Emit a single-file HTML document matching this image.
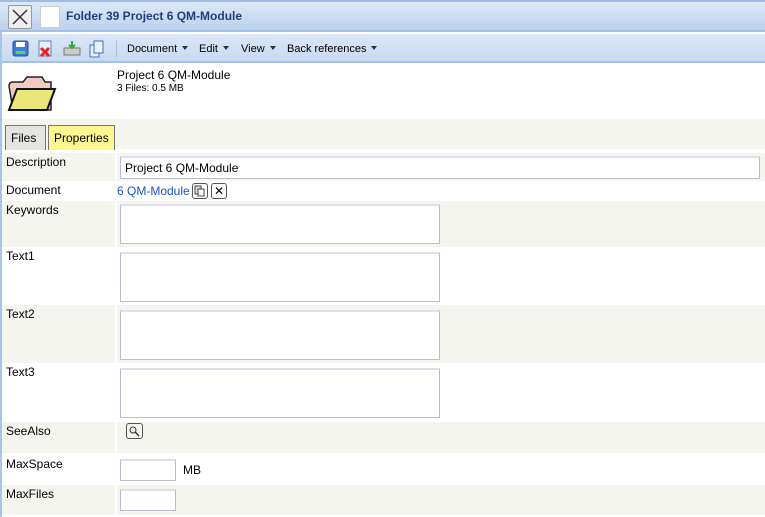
<!DOCTYPE html>
<html><head><meta charset="utf-8"><style>
*{margin:0;padding:0;box-sizing:border-box}
body{width:765px;height:517px;overflow:hidden;background:#fff;font-family:"Liberation Sans",Verdana,sans-serif;font-size:12px;color:#000;position:relative}
.abs{position:absolute}
.title{left:0;top:0;width:765px;height:32px;background:linear-gradient(#dde8f6,#bcd2ee);border-top:2px solid #9dbbe6;border-bottom:2px solid #a5c0e6}
.tb{left:0;top:34px;width:765px;height:29px;background:linear-gradient(#dce7f6,#c8daf1);border-bottom:2px solid #a5c0e6}
.lb{left:0;top:32px;width:2px;height:485px;background:#a9c4ea}
.menu{font-size:11px;top:43px}
.tri{display:inline-block;width:0;height:0;border-left:3px solid transparent;border-right:3px solid transparent;border-top:4px solid #234;margin-left:5px;vertical-align:2px}
.row{left:2px;width:763px}
.g{background:#f5f5f0}
.lab{position:absolute;left:4px;top:2px;font-size:12px}
.ta{position:absolute;left:120px;width:320px;background:#fff;border:1px solid #b8bccb;border-top:2px solid #dde0ea}
.vbg{position:absolute;left:113px;top:0;bottom:0;width:2px;background:#fff}
</style></head><body>
<div class="abs title"></div>
<div class="abs" style="left:8px;top:5px;width:24px;height:24px;background:#eee;border:1px solid #999;border-radius:2px"><svg width="22" height="22"><path d="M4 4L18 18M18 4L4 18" stroke="#333" stroke-width="1.5"/></svg></div>
<div class="abs" style="left:40px;top:6px;width:20px;height:22px;background:#fff;border:1px solid #ccc"></div>
<div class="abs" style="left:66px;top:9px;font-weight:bold;font-size:12px;color:#1f3f7a">Folder 39 Project 6 QM-Module</div>
<div class="abs tb"></div>
<div class="abs lb"></div>
<svg class="abs" style="left:12px;top:40px" width="95" height="18">
<rect x="1" y="1" width="15" height="15" rx="2" fill="#3d7fd4" stroke="#1f4f9a"/><rect x="4" y="2" width="9" height="5" fill="#fff"/><rect x="4" y="11" width="9" height="3" fill="#6c6"/>
<rect x="27" y="1" width="12" height="15" fill="#e8f0fb" stroke="#5a86c8"/><path d="M29 8l8 8M37 8l-8 8" stroke="#e22" stroke-width="3"/>
<rect x="52" y="8" width="16" height="7" fill="#ccc" stroke="#777"/><path d="M60 1v7M57 5l3 3 3-3" stroke="#3a3" stroke-width="2" fill="none"/>
<rect x="78" y="5" width="9" height="12" fill="#e8f0fb" stroke="#3e6fb8"/><rect x="82" y="1" width="9" height="12" fill="#e8f0fb" stroke="#3e6fb8"/>
</svg>
<div class="abs" style="left:116px;top:40px;width:1px;height:17px;background:#a9bfdf"></div>
<div class="abs menu" style="left:127px">Document<span class="tri"></span></div>
<div class="abs menu" style="left:199px">Edit<span class="tri"></span></div>
<div class="abs menu" style="left:241px">View<span class="tri"></span></div>
<div class="abs menu" style="left:287px">Back references<span class="tri"></span></div>
<svg class="abs" style="left:4px;top:70px" width="54" height="44">
<path d="M9 40L5 16Q5 12 9 12h10l4-5h15l3 5h6v28z" fill="#f2c9c0" stroke="#222" stroke-width="1.5"/>
<path d="M5 40L13 19h38l-8 21z" fill="#e9e67a" stroke="#111" stroke-width="2"/>
</svg>
<div class="abs" style="left:117px;top:68px;font-size:12px">Project 6 QM-Module</div>
<div class="abs" style="left:117px;top:83px;font-size:10px">3 Files: 0.5 MB</div>
<div class="abs g" style="left:2px;top:119px;width:763px;height:30px"></div>
<div class="abs" style="left:5px;top:125px;width:41px;height:25px;background:#e4e4e0;border:1px solid #777;border-bottom:none;padding:5px 0 0 5px">Files</div>
<div class="abs" style="left:48px;top:125px;width:67px;height:25px;background:#fdf58e;border:1px solid #777;border-bottom:none;padding:5px 0 0 5px">Properties</div>

<div class="abs row g" style="top:153px;height:28px"><div class="vbg"></div><div class="lab">Description</div>
<div class="ta" style="left:118px;top:3px;width:640px;height:23px;padding:3px 4px 0;font-size:12px">Project 6 QM-Module</div></div>
<div class="abs row" style="top:181px;height:20px"><div class="lab">Document</div>
<div class="abs" style="left:115px;top:3px;color:#1a55c8">6 QM-Module</div>
<div class="abs" style="left:190px;top:2px;width:16px;height:16px;border:1px solid #555;border-radius:3px"><svg width="14" height="14"><rect x="2" y="2" width="6" height="8" fill="#ddd" stroke="#444"/><rect x="5" y="5" width="6" height="7" fill="#fff" stroke="#444"/></svg></div>
<div class="abs" style="left:209px;top:2px;width:16px;height:16px;border:1px solid #555;border-radius:3px;text-align:center;line-height:14px;font-size:12px">✕</div></div>
<div class="abs row g" style="top:201px;height:46px"><div class="vbg"></div><div class="lab">Keywords</div><div class="ta" style="left:118px;top:3px;height:40px"></div></div>
<div class="abs row" style="top:247px;height:58px"><div class="lab">Text1</div><div class="ta" style="left:118px;top:5px;height:50px"></div></div>
<div class="abs row g" style="top:305px;height:58px"><div class="vbg"></div><div class="lab">Text2</div><div class="ta" style="left:118px;top:5px;height:50px"></div></div>
<div class="abs row" style="top:363px;height:58px"><div class="lab">Text3</div><div class="ta" style="left:118px;top:5px;height:50px"></div></div>
<div class="abs row g" style="top:422px;height:31px"><div class="vbg"></div><div class="lab">SeeAlso</div>
<div class="abs" style="left:124px;top:1px;width:17px;height:16px;border:1px solid #555;border-radius:3px"><svg width="15" height="14"><circle cx="6" cy="6" r="3" fill="none" stroke="#333"/><path d="M8 8l4 4" stroke="#333" stroke-width="1.5"/></svg></div></div>
<div class="abs row" style="top:455px;height:30px"><div class="lab">MaxSpace</div><div class="ta" style="left:118px;top:4px;width:56px;height:22px"></div><div class="abs" style="left:181px;top:8px">MB</div></div>
<div class="abs row g" style="top:485px;height:30px"><div class="vbg"></div><div class="lab">MaxFiles</div><div class="ta" style="left:118px;top:4px;width:56px;height:22px"></div></div>
</body></html>
